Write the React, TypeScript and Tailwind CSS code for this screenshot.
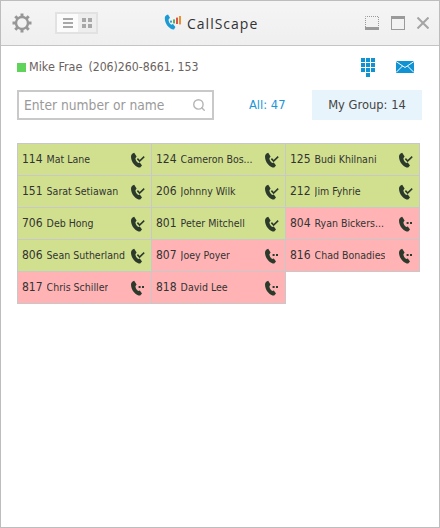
import { Search } from "lucide-react";

type Extension = {
    ext: string;
    name: string;
    busy?: boolean;
};

const extensions: Extension[] = [
    { ext: "114", name: "Mat Lane" },
    { ext: "124", name: "Cameron Bos..." },
    { ext: "125", name: "Budi Khilnani" },
    { ext: "151", name: "Sarat Setiawan" },
    { ext: "206", name: "Johnny Wilk" },
    { ext: "212", name: "Jim Fyhrie" },
    { ext: "706", name: "Deb Hong" },
    { ext: "801", name: "Peter Mitchell" },
    { ext: "804", name: "Ryan Bickers...", busy: true },
    { ext: "806", name: "Sean Sutherland" },
    { ext: "807", name: "Joey Poyer", busy: true },
    { ext: "816", name: "Chad Bonadies", busy: true },
    { ext: "817", name: "Chris Schiller", busy: true },
    { ext: "818", name: "David Lee", busy: true },
];

const handsetPath = "M4.2 0.8 L6.6 4.4 L5.4 6.2 C5.6 8.2 6.6 9.8 8.2 11 L9.8 10.6 L12 13.6 L10.2 15.6 C6 15.6 1 10.4 1 4.4 C1 2.8 2.6 1.2 4.2 0.8 Z";

function PhoneIcon({ busy }: { busy?: boolean }) {
    return (
        <svg width="16" height="16" viewBox="0 0 16 16" className="shrink-0 text-[#2c3a2c]" aria-hidden="true">
            <path d={handsetPath} fill="currentColor" />
            {busy ? (
                <>
                    <rect x="8.6" y="6" width="2" height="2" fill="currentColor" />
                    <rect x="12" y="6" width="2" height="2" fill="currentColor" />
                </>
            ) : (
                <path d="M7.4 6.6 L9.6 9 L14.2 4.6" fill="none" stroke="currentColor" strokeWidth="1.6" />
            )}
        </svg>
    );
}

function Gear() {
    return (
        <svg width="20" height="20" viewBox="0 0 20 20" className="text-[#979797]" aria-hidden="true">
            <circle cx="10" cy="10" r="6" fill="none" stroke="currentColor" strokeWidth="2.4" />
            <g stroke="currentColor" strokeWidth="3">
                <path d="M10 0.5V4" />
                <path d="M10 16V19.5" />
                <path d="M0.5 10H4" />
                <path d="M16 10H19.5" />
                <path d="M3.3 3.3L5.7 5.7" />
                <path d="M14.3 14.3L16.7 16.7" />
                <path d="M3.3 16.7L5.7 14.3" />
                <path d="M14.3 5.7L16.7 3.3" />
            </g>
        </svg>
    );
}

function Logo() {
    return (
        <svg width="18" height="18" viewBox="0 0 18 18" aria-hidden="true">
            <path d="M4 0.5 L6 3.8 L4.6 5.4 C4.4 7.4 5.6 9.6 7.2 10.8 L9 10 L11.4 13 L10 15.4 C6 15.8 0.6 10 0.8 4 C0.8 2.4 2.2 1 4 0.5 Z" fill="#1b9ad6" />
            <rect x="6" y="6.6" width="2" height="2" fill="#3d9fd0" />
            <rect x="9" y="5.4" width="2" height="4" fill="#5fae57" />
            <rect x="12" y="3.6" width="2" height="6.4" fill="#d9534f" />
            <rect x="15" y="2" width="2" height="8.4" fill="#f0902c" />
        </svg>
    );
}

function ViewToggle() {
    return (
        <div className="flex h-[22px] w-[43px] border-2 border-[#e2e2e2] bg-[#f7f7f7]">
            <div className="flex w-[21px] flex-col items-center justify-center gap-[2px] bg-[#fbfbfb]">
                <div className="h-[2px] w-[10px] bg-[#a8a8a8]" />
                <div className="h-[2px] w-[10px] bg-[#a8a8a8]" />
                <div className="h-[2px] w-[10px] bg-[#a8a8a8]" />
            </div>
            <div className="flex flex-1 items-center justify-center bg-[#eeeeee]">
                <div className="grid grid-cols-2 gap-[2px]">
                    <div className="h-[4px] w-[4px] bg-[#a8a8a8]" />
                    <div className="h-[4px] w-[4px] bg-[#a8a8a8]" />
                    <div className="h-[4px] w-[4px] bg-[#a8a8a8]" />
                    <div className="h-[4px] w-[4px] bg-[#a8a8a8]" />
                </div>
            </div>
        </div>
    );
}

function WindowButtons() {
    return (
        <div className="flex items-center gap-[12px]">
            <svg width="14" height="14" viewBox="0 0 14 14" className="text-[#9a9a9a]" aria-hidden="true">
                <path d="M0.5 11V0.5H13.5V11" fill="none" stroke="currentColor" strokeDasharray="1 1" />
                <rect y="11" width="14" height="3" fill="currentColor" />
            </svg>
            <div className="h-[14px] w-[14px] border border-t-[3px] border-[#9a9a9a]" />
            <svg width="12" height="12" viewBox="0 0 12 12" className="text-[#a4a4a4]" aria-hidden="true">
                <path d="M0.5 0.5L11.5 11.5M11.5 0.5L0.5 11.5" stroke="currentColor" strokeWidth="2" />
            </svg>
        </div>
    );
}

function Keypad() {
    return (
        <div className="grid w-[14px] grid-cols-3 gap-[1px]">
            {[0, 1, 2, 3, 4, 5, 6, 7, 8].map((i) => (
                <div key={i} className="h-[4px] w-[4px] bg-[#0f93d2]" />
            ))}
            <div className="col-start-2 h-[4px] w-[4px] bg-[#0f93d2]" />
        </div>
    );
}

function Mail() {
    return (
        <svg width="18" height="12" viewBox="0 0 18 12" aria-hidden="true">
            <rect width="18" height="12" fill="#0f93d2" />
            <path d="M0 0.5L9 6.5L18 0.5M0 11.5L6.5 5M18 11.5L11.5 5" fill="none" stroke="#ffffff" strokeWidth="1" />
        </svg>
    );
}

function ExtensionCell({ item }: { item: Extension }) {
    return (
        <div className={`flex h-[32px] items-center border-b border-r border-[#c8c8c8] pl-[4px] pr-[5px] ${item.busy ? "bg-[#ffb3b5]" : "bg-[#d1e08e]"}`}>
            <div className="flex min-w-0 flex-1 items-baseline pb-[2px]">
                <span className="mr-[4px] text-[12px] text-[#333]">{item.ext}</span>
                <span className="truncate text-[10.5px] text-[#333]">{item.name}</span>
            </div>
            <PhoneIcon busy={item.busy} />
        </div>
    );
}

export default function App() {
    return (
        <div className="flex h-[528px] w-[440px] flex-col border border-[#bdbdbd] bg-white font-['DejaVu_Sans',sans-serif] [font-stretch:condensed]">
            <header className="flex h-[45px] items-center border-b border-[#c4c4c4] bg-gradient-to-b from-[#f5f5f5] to-[#efefef] pl-[11px] pr-[10px]">
                <Gear />
                <div className="ml-[23px]">
                    <ViewToggle />
                </div>
                <div className="ml-[66px] flex flex-1 items-center gap-[5px]">
                    <Logo />
                    <span className="font-['Open_Sans',sans-serif] text-[14px] tracking-[1px] text-[#333] [font-stretch:normal]">CallScape</span>
                </div>
                <WindowButtons />
            </header>

            <main className="px-[16px] pt-[11px]">
                <div className="flex h-[20px] items-center">
                    <div className="mr-[3px] h-[9px] w-[9px] bg-[#5fd35a]" />
                    <span className="mr-[6px] text-[12.5px] text-[#6a625e]">Mike Frae</span>
                    <span className="text-[12.2px] text-[#6a625e]">(206)260-8661, 153</span>
                    <div className="ml-auto mr-[9px] flex items-center gap-[21px]">
                        <Keypad />
                        <Mail />
                    </div>
                </div>

                <div className="mt-[13px] flex items-center">
                    <div className="flex h-[30px] w-[197px] items-center border-2 border-[#c9c9c9] pl-[5px] pr-[6px]">
                        <span className="flex-1 text-[13.7px] text-[#9a9a9a]">Enter number or name</span>
                        <Search size={14} strokeWidth={2.4} className="text-[#b5b5b5]" />
                    </div>
                    <span className="ml-[35px] w-[63px] text-[12.8px] text-[#1b96d8]">All: 47</span>
                    <div className="flex h-[30px] w-[110px] items-center justify-center bg-[#e8f4fb] text-[12.8px] text-[#444]">
                        My Group: 14
                    </div>
                </div>

                <div className="mt-[23px] grid w-[403px] grid-cols-[134px_134px_134px] border-l border-t border-[#c8c8c8]">
                    {extensions.map((item) => (
                        <ExtensionCell key={item.ext} item={item} />
                    ))}
                </div>
            </main>
        </div>
    );
}
